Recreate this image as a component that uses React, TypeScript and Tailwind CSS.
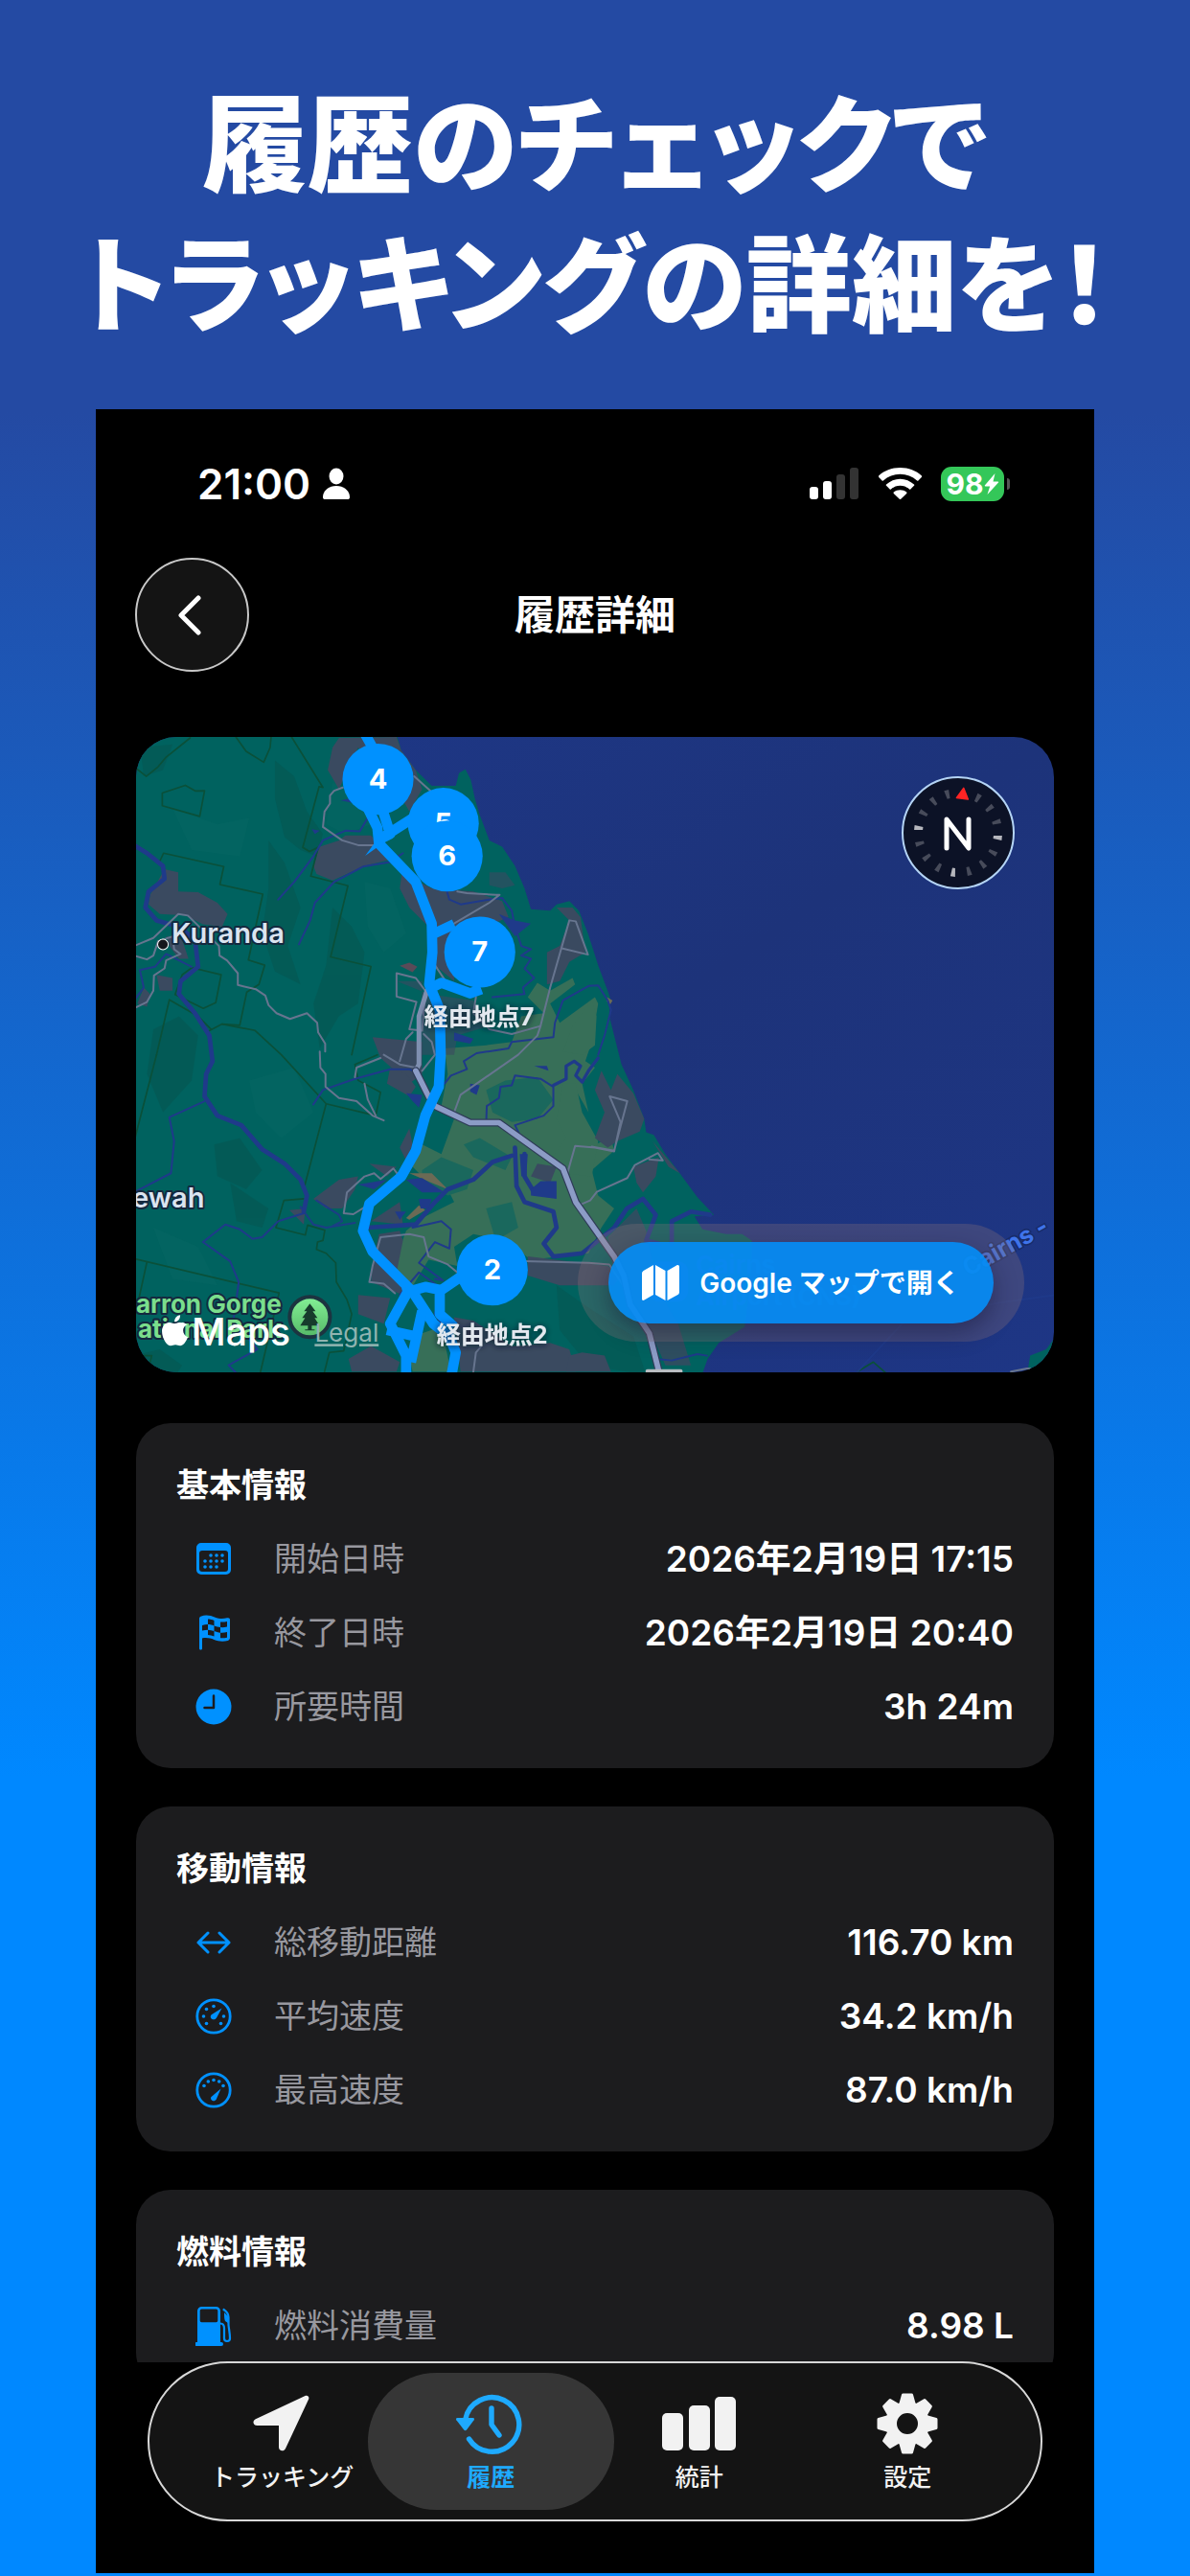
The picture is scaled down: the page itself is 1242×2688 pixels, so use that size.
import type { ReactNode } from "react";

const LATIN = "font-['Inter','Noto_Sans_CJK_JP',sans-serif]";

/* ---------- status bar ---------- */

function StatusBar() {
  return (
    <div className="flex h-[155px] items-center justify-between pr-[88px] pl-[106px]">
      <div className="flex items-center gap-3">
        <span className="text-[44px] leading-none font-semibold text-white">21:00</span>
        <svg viewBox="0 0 30 34" className="h-[34px] w-[30px]" fill="#fff" aria-hidden="true">
          <ellipse cx="15" cy="9" rx="7.5" ry="8.5" />
          <path d="M1 31c0-7 6-12 14-12s14 5 14 12c0 1.500-1 2-2 2H3c-1 0-2-.5-2-2z" />
        </svg>
      </div>
      <div className="flex items-center gap-5">
        <svg viewBox="0 0 52 34" className="h-[34px] w-[52px]" aria-label="signal">
          <rect x="0" y="20" width="9" height="13" rx="3" fill="#fff" />
          <rect x="14" y="14" width="9" height="19" rx="3" fill="#fff" />
          <rect x="28" y="7" width="9" height="26" rx="3" fill="#333" />
          <rect x="42" y="0" width="9" height="33" rx="3" fill="#333" />
        </svg>
        <svg viewBox="0 0 45 33" className="h-[33px] w-[45px]" fill="#fff" aria-label="wifi">
          <path d="M0 8.500C6 3 13.500 0 22.500 0S39 3 45 8.500c.3.400.2.900 0 1.200l-3.600 3.700c-.4.400-.9.400-1.300 0C35.200 9 29.200 6.800 22.500 6.800S9.800 9 4.900 13.400c-.4.400-.9.400-1.300 0L0 9.700c-.2-.3-.2-.8 0-1.200z" />
          <path d="M8 17.600c4-3.700 9-5.900 14.500-5.900s10.500 2.200 14.500 5.900c.4.300.4.800 0 1.200l-3.700 3.600c-.4.400-.8.400-1.200 0-2.700-2.400-6-3.700-9.600-3.700s-6.900 1.300-9.600 3.700c-.4.400-.8.400-1.200 0L8 18.800c-.4-.4-.4-.9 0-1.200z" />
          <path d="M15.800 25.600c1.900-1.600 4.200-2.400 6.700-2.400s4.800.8 6.700 2.400c.4.400.4.900 0 1.300l-6 5.800c-.4.400-1 .4-1.400 0l-6-5.800c-.4-.4-.4-.9 0-1.300z" />
        </svg>
        <div className="flex items-center gap-[3px]">
          <div className="flex h-[36px] w-[66px] items-center justify-center rounded-[11px] bg-[#34c759]">
            <span className="text-[30px] leading-none font-bold text-white">98</span>
            <svg viewBox="0 0 16 24" className="h-6 w-4" fill="#fff" aria-hidden="true">
              <path d="M11.500 1 1 13.200c-.5.600-.2 1.200.5 1.200h4.700L3.500 23 15 10.600c.5-.6.200-1.200-.6-1.200H9.500z" />
            </svg>
          </div>
          <div className="h-3 w-[3px] rounded-r-full bg-[#555]" />
        </div>
      </div>
    </div>
  );
}

/* ---------- map ---------- */

function Pin({ x, y, n }: { x: number; y: number; n: string }) {
  return (
    <g>
      <circle cx={x} cy={y} r="37" fill="#0091ff" />
      <text x={x} y={y + 10} textAnchor="middle" fontSize="29" fontWeight="700" fill="#fff">
        {n}
      </text>
    </g>
  );
}

function MapDrawing() {
  return (
    <svg
      viewBox="0 0 956 663"
      preserveAspectRatio="xMinYMin slice"
      className={"block h-full w-full " + LATIN}
      role="img"
      aria-label="Map"
    >
      <defs>
        <linearGradient id="sea" x1="0" y1="0" x2="1" y2="1">
          <stop offset="0" stopColor="#1e3888" />
          <stop offset="0.5" stopColor="#1d337a" />
          <stop offset="1" stopColor="#1e3685" />
        </linearGradient>
        <linearGradient id="tree" x1="0" y1="0" x2="0" y2="1">
          <stop offset="0" stopColor="#84f096" />
          <stop offset="1" stopColor="#55b967" />
        </linearGradient>
        <filter id="soft" x="-30%" y="-60%" width="160%" height="220%">
          <feDropShadow dx="0" dy="1" stdDeviation="3" floodColor="#101828" floodOpacity="0.9" />
        </filter>
      </defs>
      <rect width="956" height="663" fill="url(#sea)" />
      <g transform="translate(-2 -9) scale(0.3333)" strokeLinejoin="round" strokeLinecap="round" fill="none">
        {/* land */}
        <path
          fill="#00625f"
          d="M0 0H815L835 70 880 130 930 180 1005 180 1015 140 1035 128 1052 160 1065 220 1080 270 1110 350 1150 370 1190 430 1220 500 1240 565 1300 570 1320 550 1360 540 1390 570 1418 640 1450 740 1487 840 1485 900 1500 960 1523 1050 1560 1130 1594 1220 1600 1262 1624 1270 1660 1330 1705 1390 1760 1465 1812 1520 1751 1525 1776 1565 1850 1580 1900 1580 1930 1600 1930 1680 1908 1870 1827 1920 1792 1970 1771 2030H0Z"
        />
        <path fill="#00625f" d="M2880 1900 2850 1940 2800 1960 2790 2020H2900Z" />
        {/* relief shading */}
        <g fill="#06544f" opacity="0.5">
          <path d="M440 100 500 150 540 260 590 330 570 400 520 380 470 340 440 220Z" />
          <path d="M420 350 470 420 520 560 480 680 520 800 440 760 400 640 420 500Z" />
          <path d="M620 560 680 620 720 700 700 860 640 900 580 1000 560 860 600 740Z" />
          <path d="M20 60 120 50 90 130 30 150Z" />
          <path d="M250 1300 330 1280 400 1380 350 1440 260 1400Z" />
          <path d="M60 940 140 900 200 960 180 1100 90 1200 40 1080Z" />
          <path d="M0 1960 80 1940 150 1990 130 2020 0 2020Z" />
          <path d="M1320 1740 1420 1810 1560 1900 1600 2020 1420 1990 1330 1880Z" />
          <path d="M300 1420 420 1500 400 1560 320 1540Z" />
        </g>
        <g fill="#0b6b66" opacity="0.3">
          <path d="M120 250 260 300 360 280 330 400 180 380Z" />
          <path d="M360 1100 500 1060 560 1200 460 1280 380 1200Z" />
          <path d="M60 1560 200 1620 260 1740 120 1720Z" />
          <path d="M720 480 800 500 850 640 780 700 730 620Z" />
          <path d="M620 170 710 200 740 300 660 330 600 300Z" />
        </g>
        {/* lowland fields */}
        <g fill="#376f58">
          <path d="M970 1000 1100 990 1180 980 1210 900 1280 890 1230 840 1260 795 1300 820 1370 780 1378 800 1300 860 1330 920 1440 840 1450 860 1430 980 1410 1040 1440 1060 1400 1110 1420 1200 1380 1130 1350 1190 1400 1240 1430 1260 1440 1300 1490 1280 1500 1320 1430 1380 1450 1460 1500 1500 1460 1560 1420 1640 1240 1660 1160 1600 1060 1580 1000 1620 1010 1680 920 1660 860 1760 810 1680 850 1570 900 1530 1000 1480 980 1440 920 1420 870 1370 900 1300 960 1330 1000 1220 960 1180 980 1080Z" />
          <path d="M1340 1110 1380 1110 1400 1200 1450 1290 1430 1400 1340 1390 1300 1350 1350 1280 1320 1220Z" />
          <path d="M870 1900 960 1870 990 2010 870 2010 860 1960Z" />
          <path d="M1430 850 1445 900 1440 990 1400 1020 1340 1010 1370 930Z" />
        </g>
        <g fill="#1a685d">
          <path d="M1100 1130 1160 1100 1260 1090 1310 1160 1260 1220 1180 1230 1120 1200Z" />
          <path d="M1030 1300 1080 1280 1180 1340 1160 1380 1060 1340Z" />
          <path d="M900 1380 960 1340 1060 1380 1040 1440 980 1460 900 1420Z" />
          <path d="M1100 1500 1180 1480 1200 1560 1130 1600Z" />
        </g>
        {/* built-up areas */}
        <g fill="#3a4a60">
          <path d="M820 27 835 70 880 130 900 190 860 260 820 190 700 60 640 190 605 130 620 60 640 30Z" />
          <path d="M95 440 138 450 138 510 200 512 260 545 292 580 275 620 215 612 160 585 80 580 45 550 50 520Z" />
          <path d="M580 370 640 350 660 335 740 335 790 390 800 410 720 430 620 475 570 455 560 430Z" />
          <path d="M840 430 890 480 930 500 1060 510 1150 540 1170 590 1100 620 1060 600 1000 700 1000 790 940 740 920 620 860 560 830 500Z" />
          <path d="M1110 450 1160 450 1190 490 1150 500 1110 490Z" opacity="0.6" />
          <path d="M1320 560 1370 560 1395 590 1410 700 1360 730 1330 790 1290 800 1290 700 1330 680 1360 600Z" />
          <path d="M820 790 900 790 895 1020 1000 1020 1010 960 1110 930 1060 850 920 830Z" opacity="0.6" />
          <path d="M745 965 900 980 900 1080 860 1110 770 1030Z" />
          <path d="M100 650 150 660 170 720 140 720 110 680Z" />
          <path d="M70 770 120 780 120 820 80 820ZM30 810 50 830 40 870 10 860Z" />
          <path d="M800 1060 850 1080 880 1120 860 1150 790 1110Z" />
          <path d="M860 1250 870 1300 850 1350 830 1310ZM735 1360 820 1370 790 1400Z" />
          <path d="M560 1470 640 1410 700 1400 690 1440 650 1500 600 1500ZM485 1505 535 1500 530 1550Z" />
          <path d="M765 1580 830 1570 840 1600 820 1700 860 1740 840 1770 740 1730 745 1680Z" />
          <path d="M700 1770 800 1780 780 1860 700 1830ZM670 1970 740 1930 830 1980 820 2010 680 2010Z" />
          <path d="M740 1540 830 1480 840 1550Z" />
          <path d="M1240 1400 1260 1360 1320 1370 1300 1420Z" />
          <path d="M1230 1650 1480 1680 1520 1710 1500 1740 1330 1740 1230 1710Z" />
          <path d="M1000 1840 1060 1850 1180 1930 1300 1920 1360 1940 1380 2010 1020 2010Z" />
          <path d="M1460 1070 1490 1130 1510 1080 1560 1140 1594 1220 1580 1260 1510 1290 1480 1310 1440 1280 1470 1200 1440 1130Z" />
          <path d="M1560 1370 1640 1340 1630 1400 1590 1450 1570 1420ZM1620 1290 1705 1390 1670 1370Z" />
          <path d="M1480 1590 1570 1500 1600 1570 1640 1760 1700 1860 1740 1990 1660 1990 1600 1850 1500 1700Z" opacity="0.8" />
          <path d="M1360 1960 1400 1950 1470 1960 1490 2010 1350 2010Z" />
        </g>
        <g fill="#6b6a55">
          <path d="M860 1390 930 1390 980 1440 930 1420Z" />
          <path d="M850 1530 890 1490 910 1505 860 1535Z" />
          <path d="M1478 840 1495 850 1488 862 1476 852Z" />
        </g>
        <path fill="#5a4a58" d="M830 742 860 732 885 745 870 762Z" />
        {/* park boundaries */}
        <g stroke="#0a5039" strokeWidth="5">
          <path d="M0 120 38 150 75 120 100 90 175 30M318 27 350 72 405 106 425 60 428 27M492 27 590 185 578 182 527 372 548 385 575 372 552 462 668 492 614 714 740 744 680 1020" />
          <path d="M88 202 160 178 192 196 220 195 205 275 88 242ZM78 420 92 390 280 432 268 488 402 518 357 724 408 740 390 800 352 824 330 928 275 924 235 945" />
          <path d="M180 748 272 770 255 857 216 875 128 832 150 770ZM70 1020 110 848 200 900 240 940M275 924 378 944 460 1020 600 1173 755 1210 770 1137 700 1100 690 1050 760 1020M600 1173 530 1440" />
          <path d="M0 1657 453 1764 395 2010M40 1667 0 1850M530 1470 468 1475 443 1560 535 1583 542 1552 596 1568 590 1600 573 1605 570 1628 600 1640 630 1670 632 1730 665 1785 680 1830 655 1945 610 1950 595 2010M0 1960 55 1960 45 2000" />
          <path d="M70 1020 0 1290M2260 2010 2310 1980 2350 2015" />
        </g>
        {/* waterways */}
        <g stroke="#1f3a8a">
          <g strokeWidth="6">
            <path d="M450 535 500 480 560 400 590 350 660 320 705 322 730 280M515 675 550 600 565 545 625 480 715 432 800 418 840 390M975 500 985 535 1020 550 1110 535 1150 530 1180 570 1190 620 1210 680 1240 690 1210 710 1240 720 1220 750 1250 780 1215 810 1220 830 1120 840" />
            <path d="M0 850 30 810 18 755 65 745 100 705 180 745M220 1165 110 1215 125 1290 115 1390 0 1450M560 1175 590 1130 690 1095 800 1065 860 1065 880 1075" />
            <path d="M530 1515 450 1540 400 1590 370 1595 330 1565 285 1550 215 1605 300 1665 327 1730 310 1850 385 1940 295 1990 320 2015" />
            <path d="M970 1110 990 1085 1040 1065 1030 1040 1070 1015 1170 1000 1180 980 1310 965 1315 920 1340 850 1420 805 1450 803 1480 850 1490 880 1470 960 1450 1020" />
            <path d="M1100 1235 1102 1180 1140 1155 1145 1120 1180 1115 1190 1085 1270 1095 1310 1120 1310 1180 1280 1210 1190 1240 1210 1280" />
            <path d="M830 1770 890 1700 960 1750 940 1830 960 1860M940 1720 965 1725 890 1670 940 1605 985 1625 990 1565 960 1540 870 1560M1630 1970 1680 1975 1760 1955 1790 1960" />
            <path d="M620 1555 650 1540 640 1520 570 1475M520 1495 560 1550 600 1560 690 1545M2260 2010 2400 1860 2700 1795 2880 1770" opacity="0.9" />
          </g>
          <path strokeWidth="10" d="M1310 1115 1350 1095 1350 1055 1375 1040 1395 1055 1380 1085 1400 1105 1420 1070 1450 1030" />
          <g strokeWidth="14">
            <path d="M0 365 40 390 90 430 95 470 45 510 35 560 70 600 140 620 190 660 200 745 145 790 140 830 190 890 235 960 245 1040 225 1080 220 1150 260 1210 335 1240 400 1315 470 1360 520 1410 540 1460 530 1510" />
            <path d="M1180 1335 1120 1355 1060 1410 980 1440 940 1480 880 1550 730 1560M1190 1310 1195 1430 1220 1480 1310 1510 1320 1560 1280 1610 1310 1650 1400 1640 1450 1600 1500 1560 1540 1500 1590 1470 1630 1520 1600 1600 1640 1610" />
            <path d="M1680 1610 1680 1540 1740 1510 1800 1520M1220 1330 1220 1400 1250 1450" />
          </g>
        </g>
        <g fill="#1f3a8a">
          <path d="M850 1410 900 1405 970 1450 900 1450ZM890 1470 930 1470 920 1500 895 1500ZM815 1510 850 1510 830 1535Z" />
          <path d="M1240 1440 1270 1415 1320 1415 1320 1470 1240 1460ZM1205 1330 1230 1330 1225 1400 1210 1400ZM1050 1110 1080 1115 1070 1145 1050 1135Z" />
          <path d="M850 1140 900 1145 890 1185 870 1165ZM645 225 720 210 720 240ZM555 315 580 320 565 330ZM1000 950 1060 970 1050 985 1000 975Z" />
          <path d="M1140 580 1190 600 1240 610 1190 650ZM700 1425 790 1410 750 1440ZM1250 1055 1290 1055 1295 1070Z" />
        </g>
        {/* local roads */}
        <g stroke="#67758f" strokeWidth="6">
          <path d="M0 680 60 655 138 580 168 585 265 680 267 710 290 725 324 765 324 802 380 815 410 835 420 865 445 890 487 908 540 890 572 920 575 950 597 985 597 1010M580 1010 582 1060 598 1080 598 1120 640 1155 695 1165 745 1210 780 1225M0 710 40 722 60 710 75 665 120 650 125 690 145 705 100 725 95 750 62 772 60 820 40 855 0 875" />
          <path d="M652 185 625 195 612 210 612 235 595 260 590 308 650 350 700 365 760 365M875 150 925 195M1010 510 1040 515 1130 520 1142 520 1110 545 1000 610M820 765 820 838 882 855 860 940 900 945 910 820 880 780ZM940 740 970 785M1068 840 1060 890 1110 940 1180 955 1270 930 1300 810 1360 600 1380 603 1418 707 1336 687" />
          <path d="M1000 1200 1020 1145 1200 1020 1260 960 1270 930M780 1020 830 1050 880 1060M830 1040 850 970 870 950M900 1070 940 1020 930 980 905 955M655 1515 665 1450 720 1400 750 1390 770 1408 810 1375 825 1395M655 1515 685 1518 730 1490M745 1680 735 1730 780 1735 815 1765M745 1680 770 1590 860 1580 905 1590 920 1650 980 1675 1010 1700M1220 1665 1420 1670 1485 1675 1540 1760" />
          <path d="M690 1090 695 1060 770 1030M720 1110 730 1160 755 1210M1060 2010 1068 1950 1085 1930M1354 1390 1378 1305 1440 1310 1500 1322 1520 1230 1486 1150 1541 1165 1500 1320 1430 1307M1397 1487 1425 1475 1446 1448 1541 1405 1564 1365 1637 1327 1652 1350 1610 1347M2740 2010 2790 2000 2800 2000" />
        </g>
        {/* highway */}
        <path d="M915 820 890 900 890 1050 880 1070 920 1150" stroke="#7f8fb0" strokeWidth="15" />
        <path d="M880 1070 920 1150 940 1180 1050 1232 1140 1232 1200 1275 1340 1375 1380 1480 1500 1650 1530 1710 1550 1800 1610 1890 1640 2010" stroke="#2f3c58" strokeWidth="24" />
        <path d="M880 1070 920 1150 940 1180 1050 1232 1140 1232 1200 1275 1340 1375 1380 1480 1500 1650 1530 1710 1550 1800 1610 1890 1640 2010" stroke="#8c9cc6" strokeWidth="17" />
        <path d="M1604 2008H1708" stroke="#b8bcc0" strokeWidth="12" />
        {/* travelled route */}
        <g stroke="#0091ff" strokeWidth="32" strokeLinecap="butt" strokeLinejoin="round">
          <path d="M720 15 745 60 730 250 760 310 765 360 880 480 930 610 932 700 922 800 955 880 958 1020 952 1120 910 1210 880 1320 835 1400 735 1485 715 1570 745 1635 870 1760 935 1860 985 1900 1005 1950 990 2030" />
          <path d="M775 250 800 330 770 345 880 275 960 296M940 640 1000 612M930 810 960 795 1050 828 1085 815M1040 1700 960 1755 910 1745 840 1765M955 1750 955 1830 1000 1870M855 1760 800 1860 850 1960 850 2030M900 1820 865 1980M790 1880 880 1900" />
          <path d="M750 360 722 398 790 350Z" fill="#0091ff" stroke="none" />
        </g>
      </g>

      <g stroke="#14293f" strokeWidth="4" strokeLinejoin="round" paintOrder="stroke" fill="#dbe4f0">
        <circle cx="28" cy="216" r="5" fill="#15171c" stroke="#fff" strokeWidth="2" />
        <text x="37" y="215" fontSize="29" fontWeight="600">Kuranda</text>
        <text x="-4" y="490" fontSize="29" fontWeight="600">ewah</text>
        <g fill="#7ade8c" fontSize="26" fontWeight="700">
          <text x="0" y="600">arron Gorge</text>
          <text x="2" y="626">ational Park</text>
        </g>
      </g>
      <circle cx="181" cy="604" r="21" fill="url(#tree)" stroke="#1c3440" strokeWidth="4" />
      <path
        d="M181 590l6 8h-3l5 7h-3l5 8h-8v4h3v1h-10v-1h3v-4h-8l5-8h-3l5-7h-3z"
        fill="#173c2c"
      />

      <g fontSize="25" fontWeight="700">
        <text x="867" y="562" transform="rotate(-29 867 562)" fill="#3f74ea" stroke="#182c68" strokeWidth="3" paintOrder="stroke">
          Cairns -
        </text>
        <rect x="534" y="546" width="41" height="42" rx="11" fill="#2456b0" />
        <g fill="#2456b0" fontSize="26">
          <text x="583" y="559">Cairns</text>
          <text x="583" y="592">Airport (CNS)</text>
        </g>
      </g>

      <Pin x={252} y={44} n="4" />
      <Pin x={320} y={90} n="5" />
      <Pin x={324} y={124} n="6" />
      <Pin x={358} y={224} n="7" />
      <Pin x={371} y={555} n="2" />
      <g fill="#e3e8ef" fontSize="25" fontWeight="700" filter="url(#soft)">
        <text x="300" y="300">経由地点7</text>
        <text x="313" y="632">経由地点2</text>
      </g>

      <g fill="#fff">
        <path d="M47 610c-3-1-6 1-7 1s-4-2-7-1c-4 1-6 5-6 9 0 7 5 15 9 15 2 0 3-1 5-1s3 1 5 1c3 0 6-4 8-9-3-1-5-4-5-7s2-5 4-6c-2-2-4-3-6-2zM46 602c-3 0-6 3-6 7 4 0 6-3 6-7z" />
        <text x="58" y="634" fontSize="39" fontWeight="500">Maps</text>
      </g>
      <a href="#legal">
        <text x="186" y="630" fontSize="26" fontWeight="400" fill="#8fb3b0" textDecoration="underline">
          Legal
        </text>
      </a>
    </svg>
  );
}

const TICKS = Array.from({ length: 16 }, (_, i) => i).filter((i) => i !== 0);

function Compass() {
  return (
    <button
      type="button"
      aria-label="N"
      className="absolute top-[41px] right-[41px] size-[118px] rounded-full border-2 border-[#b4d4f5] bg-[#0c1226]"
    >
      <svg viewBox="-57 -57 114 114" className="size-full">
        <g transform="rotate(7)">
          <path d="M-6 -36 0 -47 6 -36Z" fill="#ff2424" stroke="#ff2424" strokeWidth="1.500" strokeLinejoin="round" />
          {TICKS.map((i) => (
            <path
              key={i}
              d="M-2.500 -46H2.500L1.500 -37H-1.500Z"
              transform={`rotate(${i * 22.5})`}
              fill={i % 4 === 0 ? "#b6b7bd" : "#474b5a"}
            />
          ))}
        </g>
        <path d="M-12 16V-14L11 16V-14" fill="none" stroke="#fff" strokeWidth="5" strokeLinecap="round" strokeLinejoin="round" />
      </svg>
    </button>
  );
}

function MapCard() {
  return (
    <section className="relative h-[663px] shrink-0 overflow-hidden rounded-[42px]">
      <MapDrawing />
      <Compass />
      <div className="absolute right-[31px] bottom-8 rounded-full bg-[#8a7078]/30 px-8 py-[19px]">
        <button
          type="button"
          className="flex h-[85px] w-[402px] items-center justify-center gap-[21px] rounded-full bg-[#048cf4]/92 text-[28px] font-semibold whitespace-nowrap text-white shadow-[0_10px_24px_rgba(20,20,50,0.45)]"
        >
          <svg viewBox="0 0 39 37" className="h-[37px] w-[39px]" fill="#fff" aria-hidden="true">
            <path d="M0 9c0-1.500.5-2.500 2-3.300L12 0v31L2.500 36.500C1 37.300 0 36.800 0 35.500zM14 0l10.500 6v31L14 31zM26.500 6 36 .5c1.800-1 3-.3 3 1.500v26c0 1.500-.5 2.500-2 3.300L26.500 37z" />
          </svg>
          <span>Google マップで開く</span>
        </button>
      </div>
    </section>
  );
}

/* ---------- row icons ---------- */

function CalendarIcon() {
  const dots = [
    [16, 14], [22, 14], [28, 14],
    [10, 20], [16, 20], [22, 20], [28, 20],
    [10, 26], [16, 26], [22, 26],
  ];
  return (
    <svg viewBox="0 0 38 38" className="size-[38px]" aria-hidden="true">
      <path
        fillRule="evenodd"
        fill="#0091ff"
        d="M6 2h26a5 5 0 0 1 5 5v23a5 5 0 0 1-5 5H6a5 5 0 0 1-5-5V7a5 5 0 0 1 5-5zM7 10a3 3 0 0 0-3 3v16a3 3 0 0 0 3 3h24a3 3 0 0 0 3-3V13a3 3 0 0 0-3-3z"
      />
      {dots.map(([x, y]) => (
        <circle key={`${x}-${y}`} cx={x} cy={y + 1} r="1.800" fill="#0091ff" />
      ))}
    </svg>
  );
}

function FlagIcon() {
  return (
    <svg viewBox="0 0 38 38" className="size-[38px]" aria-hidden="true">
      <path
        fill="#0091ff"
        d="M4 4c0-1 .6-1.800 1.500-2.200C11-.5 16 1 20 2.500c5 2 9 2 13 .8 1.800-.5 3 .2 3 1.700v19c0 1.500-.8 2.500-2.300 2.900-5 1.300-9.700.8-14.200-1-4-1.500-8-2.300-12.500-1.400V35c0 2-3 2-3 0z"
      />
      <g fill="#1c1c1e">
        <path d="M13 4.500c2.300 0 4.500.6 6.500 1.400v5.500c-2-.8-4.200-1.400-6.500-1.400zM26 7.500c2 .3 4.500 0 7-.6v5.500c-2.500.7-5 .9-7 .6zM7 11c2-.6 4-.9 6-.9v5.600c-2 0-4 .2-6 .8zM19.500 11.400c2 .8 4.200 1.500 6.500 1.700v5.600c-2.300-.2-4.500-.9-6.500-1.700zM13 15.700c2.300.1 4.500.6 6.500 1.400v5.500c-2-.8-4.200-1.300-6.500-1.500zM26 18.700c2.300.2 4.500 0 7-.6v5.600c-2.500.6-4.700.7-7 .5z" />
      </g>
    </svg>
  );
}

function ClockIcon() {
  return (
    <svg viewBox="0 0 38 38" className="size-[38px]" aria-hidden="true">
      <circle cx="19" cy="19" r="18.500" fill="#0091ff" />
      <path d="M19 7.500V20H9.500" fill="none" stroke="#1c1c1e" strokeWidth="2.500" strokeLinecap="round" strokeLinejoin="round" />
    </svg>
  );
}

function ArrowsIcon() {
  return (
    <svg viewBox="0 0 38 38" className="size-[38px]" aria-hidden="true">
      <path
        d="M3 19H35M13 9 3 19 13 29M25 9 35 19 25 29"
        fill="none"
        stroke="#0091ff"
        strokeWidth="3"
        strokeLinecap="round"
        strokeLinejoin="round"
      />
    </svg>
  );
}

function GaugeIcon({ dots, needle }: { dots: number[][]; needle: string }) {
  return (
    <svg viewBox="0 0 38 38" className="size-[38px]" fill="#0091ff" aria-hidden="true">
      <circle cx="19" cy="19" r="17.200" fill="none" stroke="#0091ff" strokeWidth="2.800" />
      {dots.map(([x, y]) => (
        <circle key={`${x}-${y}`} cx={x} cy={y} r="1.800" />
      ))}
      <path d={needle} />
    </svg>
  );
}

const AVG_DOTS = [[19, 8.5], [11.5, 11.5], [8.500, 19], [11.5, 26.5], [26.500, 26.5], [29.500, 19]];
const MAX_DOTS = [[9, 14.5], [13.300, 10], [19, 8.5], [24.700, 10], [29, 14.5]];

function FuelIcon() {
  return (
    <svg viewBox="0 0 38 42" className="h-[42px] w-[38px]" aria-hidden="true">
      <path
        fillRule="evenodd"
        fill="#0091ff"
        d="M6.500 1h15A4.500 4.500 0 0 1 26 5.500V38h1a1.700 1.700 0 0 1 0 4H1a1.700 1.700 0 0 1 0-4h1V5.500A4.500 4.500 0 0 1 6.500 1zM6.500 3.500A1.800 1.800 0 0 0 4.700 5.300V15.500a1.800 1.800 0 0 0 1.800 1.800h15a1.800 1.800 0 0 0 1.800-1.800V5.300a1.800 1.800 0 0 0-1.800-1.800z"
      />
      <path
        d="M26 18.500c3 0 4 2 4 5V34c0 4 6 4 6 0 0-5-1-9-1.500-14V12c0-4-2-6-5-8"
        fill="none"
        stroke="#0091ff"
        strokeWidth="2.200"
        strokeLinecap="round"
      />
      <path d="M30 7l4 4v7l-3-2c-1-2-1-6-1-9z" fill="#0091ff" />
    </svg>
  );
}

/* ---------- info cards ---------- */

type Row = { icon: ReactNode; label: string; value: string };

function InfoCard({ title, rows }: { title: string; rows: Row[] }) {
  return (
    <section className="flex shrink-0 flex-col gap-[33px] rounded-[36px] bg-[#1c1c1e] p-[42px]">
      <h2 className="text-[34px] leading-[45px] font-bold text-white">{title}</h2>
      {rows.map((row) => (
        <div key={row.label} className="flex h-11 items-center">
          <span className="mr-6 flex w-[78px] shrink-0 justify-center">{row.icon}</span>
          <span className="text-[34px] leading-[44px] text-[#98989f]">{row.label}</span>
          <span className="ml-auto text-[37px] leading-[44px] font-semibold text-white">{row.value}</span>
        </div>
      ))}
    </section>
  );
}

/* ---------- tab bar ---------- */

function TrackingIcon() {
  return (
    <svg viewBox="0 0 68 64" className="h-16 w-[68px]" aria-hidden="true">
      <path
        d="M57.500 3c2.500-1.200 4.800 1 3.500 3.700L37 58c-1.800 3.600-7 2.800-7-1.500V34H7.500C3 34 2 29 5.800 27.200z"
        fill="#f2f2f2"
      />
    </svg>
  );
}

function HistoryIcon() {
  return (
    <svg viewBox="0 0 76 64" className="h-16 w-[76px]" aria-hidden="true">
      <g fill="none" stroke="#1eaaff" strokeWidth="5.400" strokeLinecap="round" strokeLinejoin="round">
        <path d="M11.600 28A28.300 28.300 0 1 1 15.500 48" />
        <path d="M39 16V33L47 44" />
      </g>
      <path d="M3.500 26H19.500c1.500 0 2 1 1.200 2.200L13 38.500c-.8 1-2 1-2.800 0L2.300 28.200C1.500 27 2 26 3.500 26z" fill="#1eaaff" />
    </svg>
  );
}

function StatsIcon() {
  return (
    <svg viewBox="0 0 78 64" className="h-16 w-[78px]" fill="#f2f2f2" aria-hidden="true">
      <rect x="0" y="21" width="22" height="39" rx="5" />
      <rect x="28" y="13" width="22" height="47" rx="5" />
      <rect x="55" y="4" width="22" height="56" rx="5" />
    </svg>
  );
}

function GearIcon() {
  return (
    <svg viewBox="-32 -32 64 64" className="size-16" fill="#f2f2f2" stroke="#f2f2f2" aria-hidden="true">
      <circle r="17" fill="none" strokeWidth="12" />
      {[0, 45, 90, 135, 180, 225, 270, 315].map((a) => (
        <path key={a} d="M-7 -21 -4.500 -30H4.500L7 -21Z" strokeWidth="3" strokeLinejoin="round" transform={`rotate(${a})`} />
      ))}
    </svg>
  );
}

const TABS = [
  { label: "トラッキング", icon: <TrackingIcon />, active: false },
  { label: "履歴", icon: <HistoryIcon />, active: true },
  { label: "統計", icon: <StatsIcon />, active: false },
  { label: "設定", icon: <GearIcon />, active: false },
];

function TabBar() {
  return (
    <nav className="relative z-10 mx-[54px] -mt-px mb-[54px] grid h-[167px] shrink-0 grid-cols-4 rounded-full border-2 border-[#d8d8d8] bg-[#141414] px-[30px] py-[10px]">
      {TABS.map((tab) => (
        <button
          key={tab.label}
          type="button"
          aria-current={tab.active ? "page" : undefined}
          className={
            tab.active
              ? "-mx-5 flex flex-col items-center rounded-full bg-[#363636] pt-[21px] text-[25px] leading-9 font-bold text-[#1eaaff]"
              : "flex flex-col items-center pt-[21px] text-[25px] leading-9 font-medium whitespace-nowrap text-[#f2f2f2]"
          }
        >
          {tab.icon}
          <span className="mt-1.5">{tab.label}</span>
        </button>
      ))}
    </nav>
  );
}

/* ---------- page ---------- */

export default function App() {
  return (
    <div
      className={
        "flex h-screen flex-col overflow-hidden bg-[linear-gradient(180deg,#244aa3_0%,#244aa3_16%,#0088ff_69%)] pt-[71px] pb-[3px] " +
        LATIN
      }
    >
      <h1 className="mb-16 text-center font-['Noto_Sans_CJK_JP',sans-serif] text-[110px] leading-[146px] font-black whitespace-nowrap text-white [font-feature-settings:'palt']">
        履歴のチェックで
        <br />
        トラッキングの詳細を！
      </h1>
      <main className="mx-[100px] flex min-h-0 flex-1 flex-col bg-black">
        <StatusBar />
        <header className="grid shrink-0 grid-cols-[1fr_auto_1fr] items-center px-[41px]">
          <button
            type="button"
            aria-label="戻る"
            className="flex size-[119px] items-center justify-center rounded-full border-2 border-[#c8c8c8] bg-[#141414] pr-1.5"
          >
            <svg viewBox="0 0 26 42" className="h-[42px] w-[26px]" aria-hidden="true">
              <path d="M22 3 4 21 22 39" fill="none" stroke="#fff" strokeWidth="5" strokeLinecap="round" strokeLinejoin="round" />
            </svg>
          </button>
          <h2 className="text-[42px] leading-[60px] font-bold text-white">履歴詳細</h2>
        </header>
        <div className="flex min-h-0 flex-1 flex-col gap-10 overflow-hidden px-[42px] pt-[68px]">
          <div className="mb-[13px] shrink-0">
            <MapCard />
          </div>
          <InfoCard
            title="基本情報"
            rows={[
              { icon: <CalendarIcon />, label: "開始日時", value: "2026年2月19日 17:15" },
              { icon: <FlagIcon />, label: "終了日時", value: "2026年2月19日 20:40" },
              { icon: <ClockIcon />, label: "所要時間", value: "3h 24m" },
            ]}
          />
          <InfoCard
            title="移動情報"
            rows={[
              { icon: <ArrowsIcon />, label: "総移動距離", value: "116.70 km" },
              {
                icon: <GaugeIcon dots={AVG_DOTS} needle="M27.500 10.500 22 20.500C20 24 14.500 22 16 18.300 16.300 17.500 17 17 17.500 16.700Z" />,
                label: "平均速度",
                value: "34.2 km/h",
              },
              {
                icon: <GaugeIcon dots={MAX_DOTS} needle="M26.500 17.500 21.800 28.500C20 32 14.800 29.800 16.300 26.300Z" />,
                label: "最高速度",
                value: "87.0 km/h",
              },
            ]}
          />
          <InfoCard title="燃料情報" rows={[{ icon: <FuelIcon />, label: "燃料消費量", value: "8.98 L" }]} />
        </div>
        <TabBar />
      </main>
    </div>
  );
}
